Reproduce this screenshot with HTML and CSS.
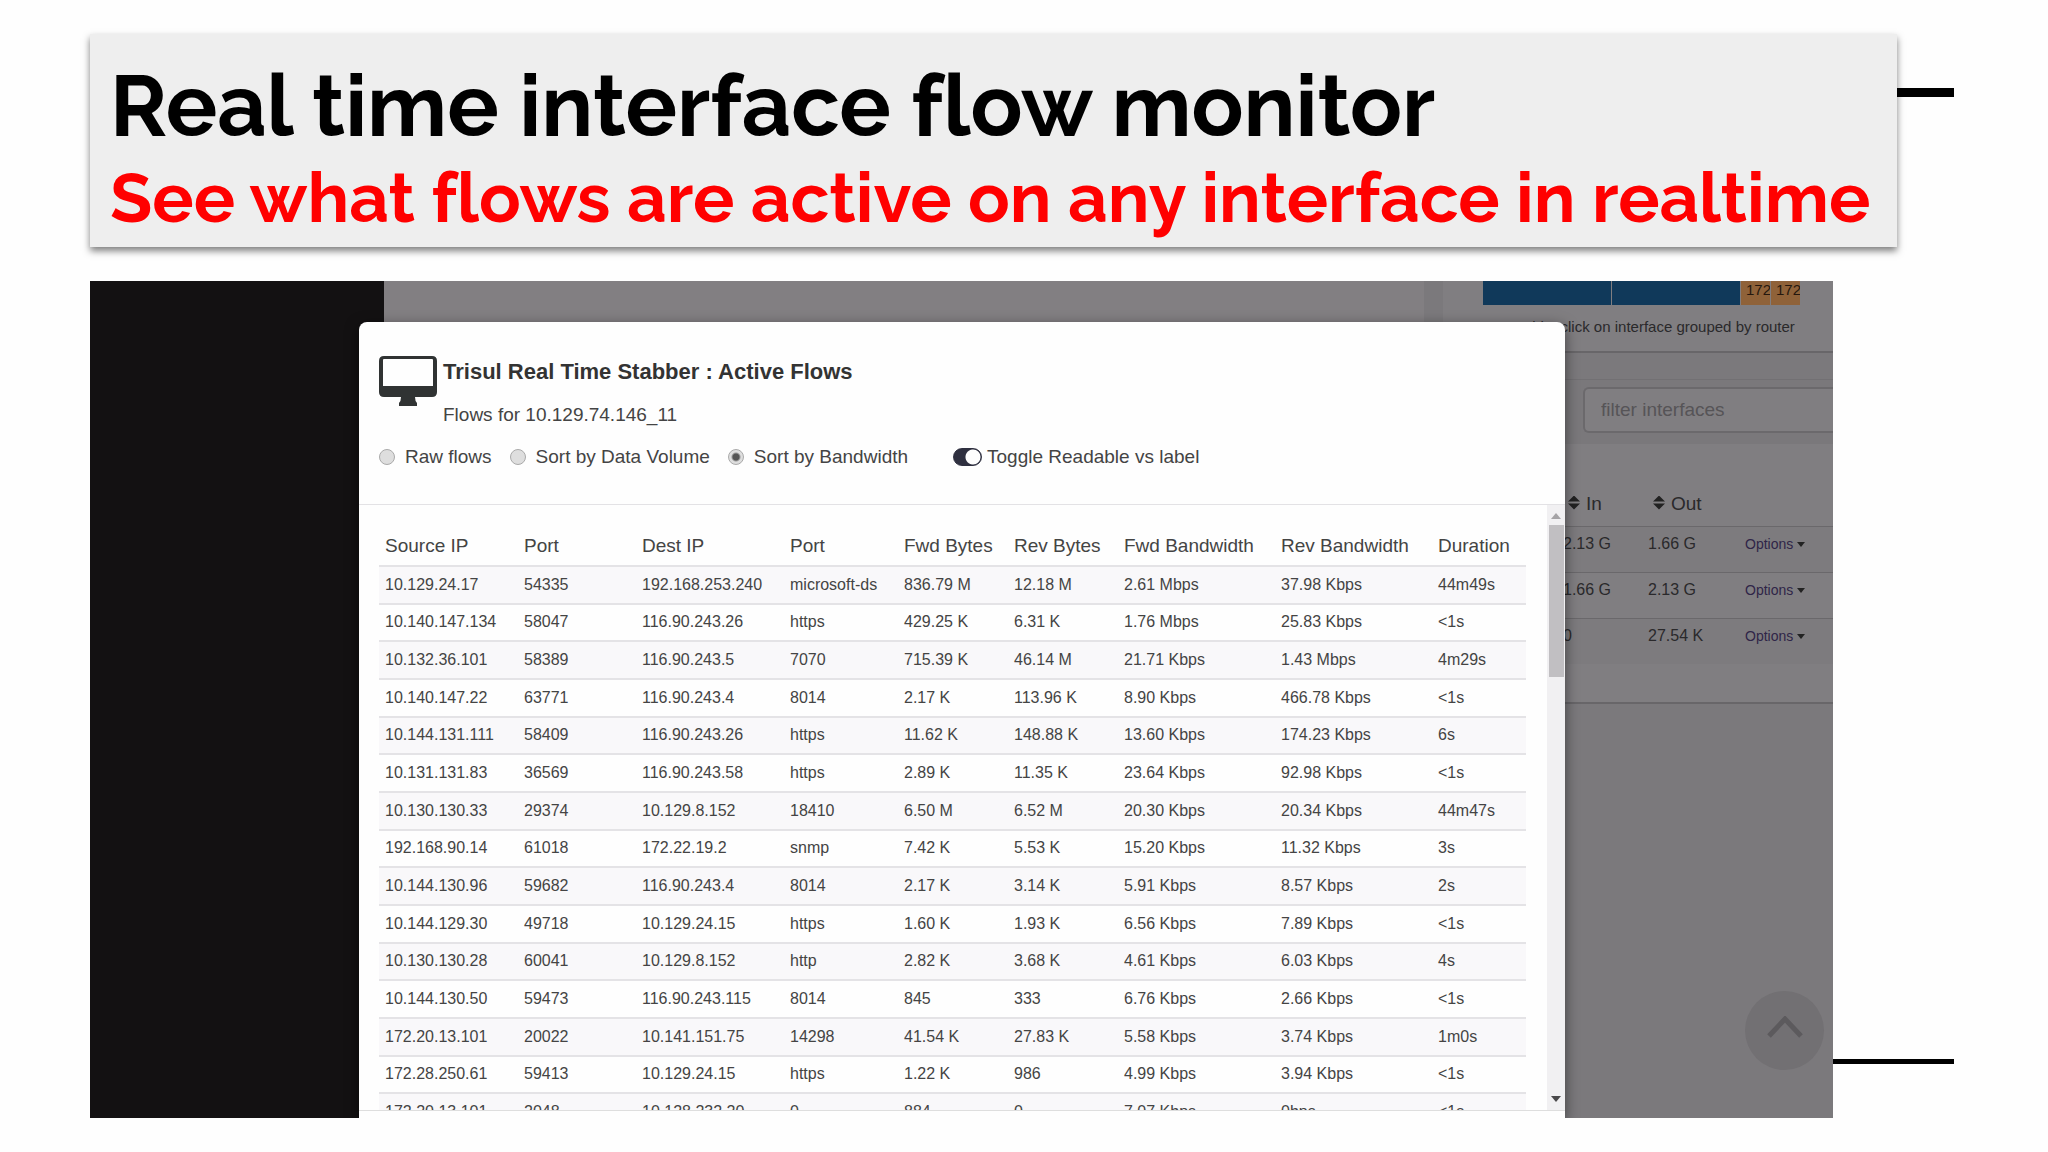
FILE: index.html
```html
<!DOCTYPE html>
<html lang="en">
<head>
    <meta charset="UTF-8">
    <meta name="viewport" content="width=device-width, initial-scale=1.0">
    <title>Real time interface flow monitor</title>
    <link rel="stylesheet" href="styles.css">
</head>
<body>
    <div class="slide">
        <header class="banner">
            <div class="title-box">
                <h1>Real time interface flow monitor</h1>
                <p>See what flows are active on any interface in realtime</p>
            </div>
        </header>

        <main class="shot-row">
            <div class="shot">
                <!-- dimmed page behind the dialog -->
                <div class="page">
                    <div class="sidebar"></div>
                    <div class="content"></div>
                    <div class="gutter"></div>
                    <div class="side-panels">
                        <section class="panel treemap-panel">
                            <div class="treemap">
                                <span class="tile blue"></span>
                                <span class="tile blue"></span>
                                <span class="tile orange">172</span>
                                <span class="tile orange">172</span>
                            </div>
                            <p class="hint">Must table, click on interface grouped by router</p>
                        </section>
                        <section class="panel interfaces-panel">
                            <div class="filter-bar">
                                <input type="text" aria-label="filter interfaces" placeholder="filter interfaces">
                            </div>
                            <table class="interfaces">
                                <thead>
                                    <tr>
                                        <th class="pad"></th>
                                        <th class="rate"><span class="sort"></span>In</th>
                                        <th class="rate"><span class="sort"></span>Out</th>
                                        <th></th>
                                    </tr>
                                </thead>
                                <tbody>
                                    <tr><td></td><td>2.13 G</td><td>1.66 G</td><td><a href="#">Options<span class="caret"></span></a></td></tr>
                                    <tr><td></td><td>1.66 G</td><td>2.13 G</td><td><a href="#">Options<span class="caret"></span></a></td></tr>
                                    <tr><td></td><td>0</td><td>27.54 K</td><td><a href="#">Options<span class="caret"></span></a></td></tr>
                                </tbody>
                            </table>
                        </section>
                    </div>
                </div>

                <button class="to-top" aria-label="Back to top">
                    <svg viewBox="0 0 36 22" width="36" height="22"><path d="M2 20 L18 3 L34 20" fill="none" stroke="#5c5a5d" stroke-width="5"/></svg>
                </button>

                <div class="modal" role="dialog" aria-labelledby="modal-title">
                    <div class="modal-header">
                        <div class="heading">
                            <svg class="desktop" viewBox="0 0 58 50" width="58" height="50">
                                <path fill="#303333" fill-rule="evenodd" d="M5 0H53Q58 0 58 5V36Q58 41 53 41H36Q36 45 38 47V50H20V47Q22 45 22 41H5Q0 41 0 36V5Q0 0 5 0ZM5 3Q4 3 4 4V30H54V4Q54 3 53 3Z"/>
                            </svg>
                            <div>
                                <h2 id="modal-title">Trisul Real Time Stabber : Active Flows</h2>
                                <p>Flows for 10.129.74.146_11</p>
                            </div>
                        </div>
                        <div class="options">
                            <label><input type="radio" name="view">Raw flows</label>
                            <label><input type="radio" name="view">Sort by Data Volume</label>
                            <label><input type="radio" name="view" checked>Sort by Bandwidth</label>
                            <label class="toggle"><input type="checkbox" checked>Toggle Readable vs label</label>
                        </div>
                    </div>
                    <div class="modal-body">
                        <div class="table-wrap">
                            <table class="flows">
                                <colgroup>
                                    <col class="c-source"><col class="c-port"><col class="c-dest"><col class="c-service"><col class="c-bytes"><col class="c-bytes"><col class="c-band"><col class="c-band"><col class="c-duration">
                                </colgroup>
                                <thead>
                                    <tr><th>Source IP</th><th>Port</th><th>Dest IP</th><th>Port</th><th>Fwd Bytes</th><th>Rev Bytes</th><th>Fwd Bandwidth</th><th>Rev Bandwidth</th><th>Duration</th></tr>
                                </thead>
                                <tbody>
                                    <tr><td>10.129.24.17</td><td>54335</td><td>192.168.253.240</td><td>microsoft-ds</td><td>836.79 M</td><td>12.18 M</td><td>2.61 Mbps</td><td>37.98 Kbps</td><td>44m49s</td></tr>
                                    <tr><td>10.140.147.134</td><td>58047</td><td>116.90.243.26</td><td>https</td><td>429.25 K</td><td>6.31 K</td><td>1.76 Mbps</td><td>25.83 Kbps</td><td>&lt;1s</td></tr>
                                    <tr><td>10.132.36.101</td><td>58389</td><td>116.90.243.5</td><td>7070</td><td>715.39 K</td><td>46.14 M</td><td>21.71 Kbps</td><td>1.43 Mbps</td><td>4m29s</td></tr>
                                    <tr><td>10.140.147.22</td><td>63771</td><td>116.90.243.4</td><td>8014</td><td>2.17 K</td><td>113.96 K</td><td>8.90 Kbps</td><td>466.78 Kbps</td><td>&lt;1s</td></tr>
                                    <tr><td>10.144.131.111</td><td>58409</td><td>116.90.243.26</td><td>https</td><td>11.62 K</td><td>148.88 K</td><td>13.60 Kbps</td><td>174.23 Kbps</td><td>6s</td></tr>
                                    <tr><td>10.131.131.83</td><td>36569</td><td>116.90.243.58</td><td>https</td><td>2.89 K</td><td>11.35 K</td><td>23.64 Kbps</td><td>92.98 Kbps</td><td>&lt;1s</td></tr>
                                    <tr><td>10.130.130.33</td><td>29374</td><td>10.129.8.152</td><td>18410</td><td>6.50 M</td><td>6.52 M</td><td>20.30 Kbps</td><td>20.34 Kbps</td><td>44m47s</td></tr>
                                    <tr><td>192.168.90.14</td><td>61018</td><td>172.22.19.2</td><td>snmp</td><td>7.42 K</td><td>5.53 K</td><td>15.20 Kbps</td><td>11.32 Kbps</td><td>3s</td></tr>
                                    <tr><td>10.144.130.96</td><td>59682</td><td>116.90.243.4</td><td>8014</td><td>2.17 K</td><td>3.14 K</td><td>5.91 Kbps</td><td>8.57 Kbps</td><td>2s</td></tr>
                                    <tr><td>10.144.129.30</td><td>49718</td><td>10.129.24.15</td><td>https</td><td>1.60 K</td><td>1.93 K</td><td>6.56 Kbps</td><td>7.89 Kbps</td><td>&lt;1s</td></tr>
                                    <tr><td>10.130.130.28</td><td>60041</td><td>10.129.8.152</td><td>http</td><td>2.82 K</td><td>3.68 K</td><td>4.61 Kbps</td><td>6.03 Kbps</td><td>4s</td></tr>
                                    <tr><td>10.144.130.50</td><td>59473</td><td>116.90.243.115</td><td>8014</td><td>845</td><td>333</td><td>6.76 Kbps</td><td>2.66 Kbps</td><td>&lt;1s</td></tr>
                                    <tr><td>172.20.13.101</td><td>20022</td><td>10.141.151.75</td><td>14298</td><td>41.54 K</td><td>27.83 K</td><td>5.58 Kbps</td><td>3.74 Kbps</td><td>1m0s</td></tr>
                                    <tr><td>172.28.250.61</td><td>59413</td><td>10.129.24.15</td><td>https</td><td>1.22 K</td><td>986</td><td>4.99 Kbps</td><td>3.94 Kbps</td><td>&lt;1s</td></tr>
                                    <tr><td>172.20.13.101</td><td>2048</td><td>10.128.232.20</td><td>0</td><td>884</td><td>0</td><td>7.07 Kbps</td><td>0bps</td><td>&lt;1s</td></tr>
                                </tbody>
                            </table>
                        </div>
                        <div class="scrollbar">
                            <span class="arrow up"></span>
                            <span class="thumb"></span>
                            <span class="arrow down"></span>
                        </div>
                    </div>
                </div>
            </div>
        </main>
    </div>
</body>
</html>
```
FILE: styles.css
```css
* {
    box-sizing: border-box;
}
body {
    margin: 0;
    background-color: #fefefe;
    font-family: "Liberation Sans", Arial, sans-serif;
    color: #444;
}
h1, h2, p {
    margin: 0;
}
.slide {
    padding: 34px 94px 34px 90px;
}

/* title banner with the black rule running out behind it */
.banner {
    padding-right: 57px;
    background: linear-gradient(#000, #000) right 54px / 100px 9px no-repeat;
}
.title-box {
    height: 213px;
    padding: 22px 20px 0;
    background-color: #eee;
    box-shadow: 0 4px 7px rgba(0,0,0,0.5);
    font-family: Raleway, Lato, sans-serif;
    font-weight: bold;
    font-variant-ligatures: none;
    white-space: nowrap;
}
.title-box h1 {
    font-size: 86px;
    line-height: 100px;
    color: #000;
}
.title-box p {
    font-size: 69px;
    line-height: 84px;
    color: #f00;
}

.shot-row {
    margin-top: 34px;
    padding-right: 121px;
    background: linear-gradient(#000, #000) right 778px / 200px 5px no-repeat;
}
.shot {
    position: relative;
    height: 837px;
    overflow: hidden;
    background-color: #7b797c;
}

/* page under the backdrop */
.page {
    display: flex;
    height: 100%;
    color: #2a292b;
}
.sidebar {
    width: 294px;
    background-color: #131112;
}
.content {
    flex: 1;
    background-color: #827f82;
}
.gutter {
    width: 19px;
}
.side-panels {
    width: 390px;
}
.panel {
    background-color: #807e81;
    border-bottom: 2px solid #686669;
}
.treemap-panel {
    height: 72px;
    padding-left: 40px;
}
.treemap {
    display: flex;
    gap: 1px;
    height: 24px;
}
.tile {
    width: 29px;
    padding-left: 5px;
    overflow: hidden;
    font-size: 15px;
    line-height: 18px;
    color: #25180e;
}
.tile.blue {
    width: 128px;
    background-color: #10395a;
}
.tile.orange {
    background-color: #8f6239;
}
.hint {
    margin-top: 13px;
    font-size: 15px;
    line-height: 18px;
    white-space: nowrap;
}
.interfaces-panel {
    height: 325px;
    margin-top: 26px;
    border-top: 1px solid #727073;
}
.filter-bar {
    height: 64px;
    padding: 7px 0 0 140px;
    background-color: #7a787b;
}
.filter-bar input {
    width: 100%;
    height: 46px;
    padding: 0 16px;
    border: 2px solid #6b696c;
    border-right: 0;
    border-radius: 6px 0 0 6px;
    background-color: #807e81;
    font: 19px "Liberation Sans", Arial, sans-serif;
}
.filter-bar input::placeholder {
    color: #565457;
}
.interfaces {
    width: 100%;
    table-layout: fixed;
    border-collapse: collapse;
    text-align: left;
}
.interfaces .pad {
    width: 114px;
}
.interfaces .rate {
    width: 85px;
}
.interfaces th {
    height: 82px;
    padding: 0 0 11px 11px;
    vertical-align: bottom;
    font-size: 19px;
    font-weight: normal;
    line-height: 22px;
    white-space: nowrap;
}
.interfaces td {
    height: 46px;
    padding: 0 0 10px 6px;
    border-top: 1px solid #6a686b;
    font-size: 16px;
    white-space: nowrap;
}
.interfaces tbody tr:nth-child(odd) {
    background-color: #7d7b7e;
}
.interfaces a {
    font-size: 14px;
    color: #2f2548;
    text-decoration: none;
}
.interfaces td:last-child {
    padding-left: 18px;
}
.caret {
    display: inline-block;
    margin: 0 0 2px 4px;
    border: 4px solid transparent;
    border-top: 5px solid #222;
    border-bottom: 0;
}
.sort {
    display: inline-block;
    width: 12px;
    height: 14px;
    margin-right: 6px;
    background-color: #222;
    clip-path: polygon(50% 0, 100% 42%, 0 42%, 0 58%, 100% 58%, 50% 100%, 0 58%, 0 42%);
}
.to-top {
    position: absolute;
    right: 9px;
    bottom: 48px;
    width: 79px;
    height: 79px;
    padding: 0 0 4px;
    border: 0;
    border-radius: 50%;
    background-color: #727073;
}

/* dialog */
.modal {
    position: absolute;
    top: 41px;
    bottom: 0;
    left: 269px;
    right: 268px;
    display: flex;
    flex-direction: column;
    border-radius: 8px 8px 0 0;
    background-color: #fefefe;
    box-shadow: 0 4px 14px rgba(0,0,0,0.5);
}
.modal-header {
    height: 183px;
    padding: 34px 20px 0;
    border-bottom: 1px solid #e3e2e5;
}
.heading {
    display: flex;
    gap: 6px;
}
.heading h2 {
    font-size: 22px;
    line-height: 32px;
    color: #333;
}
.heading p {
    margin-top: 12px;
    font-size: 19px;
    line-height: 30px;
}
.options {
    display: flex;
    margin-top: 15px;
    font-size: 19px;
    line-height: 24px;
}
.options label {
    display: flex;
    align-items: center;
    margin-right: 18px;
    white-space: nowrap;
}
.options input {
    appearance: none;
    flex: none;
    width: 16px;
    height: 16px;
    margin: 0 10px 0 0;
    border: 1px solid #aaa;
    border-radius: 50%;
    background-color: #dedede;
}
.options input[type="radio"]:checked {
    background: radial-gradient(circle, #555 3px, #dedede 5px);
}
.options .toggle {
    margin-left: 27px;
}
.options .toggle input {
    width: 29px;
    height: 18px;
    margin-right: 5px;
    border: 1px solid #2f3040;
    border-radius: 9px;
    background: radial-gradient(circle at 19px 8px, #fefefe 7px, #2f3040 8px);
}
.modal-body {
    display: flex;
    height: 606px;
    overflow: hidden;
    border-bottom: 1px solid #dedede;
}
.table-wrap {
    flex: 1;
    padding: 19px 21px 0 20px;
}
.flows {
    width: 100%;
    height: 605px;
    table-layout: fixed;
    border-collapse: collapse;
    text-align: left;
    white-space: nowrap;
}
.flows th {
    height: 42px;
    padding: 2px 0 0 6px;
    font-size: 19px;
    font-weight: normal;
}
.flows td {
    padding: 0 0 0 6px;
    border-top: 2px solid #e4e3e6;
    font-size: 16px;
}
.flows tbody tr:nth-child(odd) {
    background-color: #f9f8fa;
}
.c-source {
    width: 139px;
}
.c-port {
    width: 118px;
}
.c-dest {
    width: 148px;
}
.c-service {
    width: 114px;
}
.c-bytes {
    width: 110px;
}
.c-band {
    width: 157px;
}
.c-duration {
    width: 94px;
}
.scrollbar {
    display: flex;
    flex-direction: column;
    align-items: center;
    width: 19px;
    padding: 8px 0;
    background-color: #f1f0f2;
}
.arrow {
    border: 5px solid transparent;
}
.arrow.up {
    border-top: 0;
    border-bottom: 6px solid #a5a3a6;
}
.arrow.down {
    margin-top: auto;
    border-bottom: 0;
    border-top: 6px solid #4a494b;
}
.thumb {
    width: 15px;
    height: 152px;
    margin-top: 6px;
    background-color: #c1bfc2;
}
```
